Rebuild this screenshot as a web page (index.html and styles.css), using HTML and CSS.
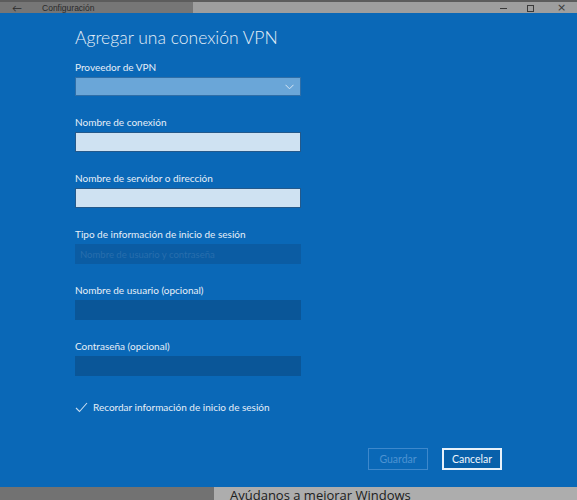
FILE: index.html
```html
<!DOCTYPE html>
<html lang="es">
<head>
<meta charset="utf-8">
<title>Agregar una conexión VPN</title>
<link rel="stylesheet" href="styles.css">
</head>
<body>
<div class="titlebar">
  <div class="tb-left">
    <span class="tb-back">&#8592;</span>
    <span class="tb-title">Configuración</span>
  </div>
  <div class="tb-right">
    <span class="tb-min"></span>
    <span class="tb-max"></span>
    <span class="tb-close">&#215;</span>
  </div>
</div>
<div class="dialog">
  <h1 class="heading">Agregar una conexión VPN</h1>
  <div class="form">
    <div class="group">
      <label class="label">Proveedor de VPN</label>
      <div class="field select">
        <svg class="chevron" width="9" height="6" viewBox="0 0 9 6"><polyline points="0.5,0.8 4.5,4.8 8.5,0.8" fill="none" stroke="#d6e6f4" stroke-width="1"/></svg>
      </div>
    </div>
    <div class="group">
      <label class="label">Nombre de conexión</label>
      <div class="field text"></div>
    </div>
    <div class="group">
      <label class="label">Nombre de servidor o dirección</label>
      <div class="field text"></div>
    </div>
    <div class="group">
      <label class="label">Tipo de información de inicio de sesión</label>
      <div class="field disabled"><span class="placeholder">Nombre de usuario y contraseña</span></div>
    </div>
    <div class="group">
      <label class="label">Nombre de usuario (opcional)</label>
      <div class="field dark"></div>
    </div>
    <div class="group">
      <label class="label">Contraseña (opcional)</label>
      <div class="field dark"></div>
    </div>
    <div class="check-row">
      <svg class="check" width="13" height="13" viewBox="0 0 13 13"><polyline points="1,7 4.5,10.5 12,2" fill="none" stroke="#c8dcf0" stroke-width="1.1"/></svg>
      <span class="check-label">Recordar información de inicio de sesión</span>
    </div>
  </div>
  <div class="buttons">
    <button class="btn btn-disabled">Guardar</button>
    <button class="btn btn-primary">Cancelar</button>
  </div>
</div>
<div class="bottombar">
  <div class="bb-left"></div>
  <div class="bb-right"><span class="bb-text">Ayúdanos a mejorar Windows</span></div>
</div>
</body>
</html>
```
FILE: styles.css
```css
* { box-sizing: border-box; }
html, body {
  margin: 0;
  padding: 0;
  width: 577px;
  height: 500px;
  overflow: hidden;
  font-family: "Lato", "Open Sans", sans-serif;
}
.titlebar {
  height: 13px;
  display: flex;
  overflow: hidden;
  border-top: 2px solid #5c5c5c;
}
.tb-left {
  width: 193px;
  background: #767676;
  display: flex;
  align-items: flex-start;
  padding-left: 12px;
}
.tb-back {
  font-size: 10px;
  color: #2a2a2a;
  line-height: 10px;
  margin-top: 1px;
}
.tb-title {
  font-family: "Liberation Sans", sans-serif;
  font-size: 8.5px;
  color: #2a2a2a;
  margin-left: 20px;
  line-height: 10px;
  margin-top: 1px;
}
.tb-right {
  flex: 1;
  background: #9e9e9e;
  position: relative;
}
.tb-min {
  position: absolute;
  left: 307px;
  top: 6px;
  width: 7px;
  height: 1px;
  background: #3a3a3a;
}
.tb-max {
  position: absolute;
  left: 334px;
  top: 3px;
  width: 7px;
  height: 7px;
  border: 1px solid #3a3a3a;
}
.tb-close {
  position: absolute;
  left: 364px;
  top: 0;
  font-size: 11px;
  line-height: 11px;
  color: #3a3a3a;
  font-family: "DejaVu Sans", sans-serif;
}
.dialog {
  height: 474px;
  background: #0a68b7;
  padding: 15px 75px 0 75px;
  display: flex;
  flex-direction: column;
}
.heading {
  margin: 0 0 12px 0;
  font-weight: 300;
  font-size: 17.5px;
  line-height: 20px;
  color: #e4eef8;
}
.form {
  display: flex;
  flex-direction: column;
  gap: 19px;
}
.group {
  display: flex;
  flex-direction: column;
  gap: 3px;
}
.label {
  font-size: 10px;
  line-height: 14px;
  color: #e6eff8;
}
.field {
  width: 226px;
  height: 20px;
  position: relative;
}
.field.select {
  height: 19px;
  background: #6aa6d8;
  border: 1px solid #2f6ea7;
}
.chevron {
  position: absolute;
  right: 6px;
  top: 6px;
}
.field.text {
  background: #cfe2f2;
  border: 1px solid #24598b;
}
.field.disabled {
  background: #0b5ca3;
  display: flex;
  align-items: center;
  padding-left: 5px;
}
.placeholder {
  font-size: 9.5px;
  color: #286ead;
}
.field.dark {
  background: #0a5698;
}
.check-row {
  display: flex;
  align-items: center;
  gap: 5px;
  height: 14px;
  margin-top: 5px;
}
.check-label {
  font-size: 10px;
  color: #e6eff8;
}
.buttons {
  display: flex;
  justify-content: flex-end;
  gap: 14px;
  margin-top: 34px;
}
.btn {
  width: 60px;
  height: 22px;
  font-family: "Lato", "Open Sans", sans-serif;
  font-size: 10.5px;
  background: #0a68b7;
  padding: 0;
}
.btn-disabled {
  border: 1px solid #3d88cc;
  color: #4d93d2;
}
.btn-primary {
  border: 2px solid #e8f1fa;
  background: #0860aa;
  color: #f2f7fc;
}
.bottombar {
  height: 13px;
  display: flex;
  overflow: hidden;
}
.bb-left {
  width: 214px;
  background: #727272;
}
.bb-right {
  flex: 1;
  background: #adadad;
  padding-left: 16px;
}
.bb-text {
  display: block;
  font-family: "Open Sans", sans-serif;
  font-size: 13px;
  line-height: 14px;
  margin-top: 1px;
  color: #202020;
}
```
